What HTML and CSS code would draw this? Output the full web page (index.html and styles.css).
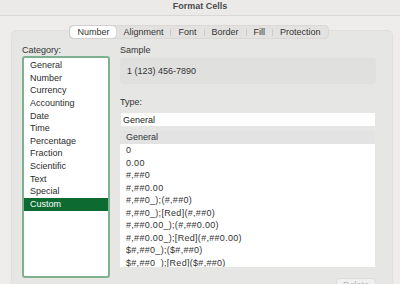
FILE: index.html
```html
<!DOCTYPE html>
<html lang="en">
<head>
    <meta charset="UTF-8">
    <meta name="viewport" content="width=device-width, initial-scale=1.0">
    <title>Format Cells</title>
    <link rel="stylesheet" href="styles.css">
</head>
<body>
    <div class="titlebar">Format Cells</div>
    <div class="main">
        <div class="panel">
            <div class="tabs">
                <div class="tab active">Number</div>
                <div class="tab">Alignment</div>
                <div class="sep"></div>
                <div class="tab">Font</div>
                <div class="sep"></div>
                <div class="tab">Border</div>
                <div class="sep"></div>
                <div class="tab">Fill</div>
                <div class="sep"></div>
                <div class="tab">Protection</div>
            </div>
            <div class="content">
                <div class="left">
                    <div class="label">Category:</div>
                    <ul class="category">
                        <li>General</li>
                        <li>Number</li>
                        <li>Currency</li>
                        <li>Accounting</li>
                        <li>Date</li>
                        <li>Time</li>
                        <li>Percentage</li>
                        <li>Fraction</li>
                        <li>Scientific</li>
                        <li>Text</li>
                        <li>Special</li>
                        <li class="selected">Custom</li>
                    </ul>
                </div>
                <div class="right">
                    <div class="label">Sample</div>
                    <div class="sample">1 (123) 456-7890</div>
                    <div class="label type-label">Type:</div>
                    <input type="text" class="type-input" value="General">
                    <ul class="formats">
                        <li class="header">General</li>
                        <li>0</li>
                        <li>0.00</li>
                        <li>#,##0</li>
                        <li>#,##0.00</li>
                        <li>#,##0_);(#,##0)</li>
                        <li>#,##0_);[Red](#,##0)</li>
                        <li>#,##0.00_);(#,##0.00)</li>
                        <li>#,##0.00_);[Red](#,##0.00)</li>
                        <li>$#,##0_);($#,##0)</li>
                        <li>$#,##0_);[Red]($#,##0)</li>
                    </ul>
                    <div class="actions">
                        <button type="button" disabled>Delete</button>
                    </div>
                </div>
            </div>
        </div>
    </div>
</body>
</html>
```

FILE: styles.css
```css
body {
    font-family: "Liberation Sans", Arial, sans-serif;
    font-size: 9px;
    margin: 0;
    padding: 0;
    background-color: #eeedec;
    color: #2f2f2f;
    overflow: hidden;
}
.titlebar {
    height: 16px;
    line-height: 12px;
    text-align: center;
    font-weight: bold;
    font-size: 9px;
    color: #4c4c4c;
    background-color: #ebeae9;
    border-bottom: 1px solid #d9d8d7;
    box-sizing: border-box;
}
.main {
    padding: 0 7px 0 11px;
}
.panel {
    margin-top: 14px;
    height: 300px;
    background-color: #e6e6e5;
    border: 1px solid #e0dfde;
    border-radius: 5px;
    padding: 0 16px 0 10px;
}
.tabs {
    display: flex;
    align-items: center;
    width: max-content;
    margin: -6px auto 0;
    height: 14px;
    box-sizing: border-box;
    border: 1px solid #d9d8d7;
    border-radius: 4px;
    background-color: #e3e2e1;
}
.tab {
    padding: 0 7px;
    line-height: 12px;
    color: #333;
}
.tab.active {
    background-color: #ffffff;
    border-radius: 4px;
    box-shadow: 0 0 1px rgba(0, 0, 0, 0.35);
    padding: 0 7px;
}
.sep {
    width: 1px;
    height: 7px;
    background-color: #cdcccb;
}
.content {
    display: flex;
    gap: 10px;
    margin-top: 5px;
}
.left {
    width: 88px;
}
.right {
    flex: 1;
}
.label {
    line-height: 12px;
    color: #333;
}
.category {
    list-style: none;
    margin: 0;
    padding: 1px 0 0;
    height: 222px;
    box-sizing: border-box;
    background-color: #ffffff;
    border: 2px solid #7eb18f;
    border-radius: 3px;
}
.category li {
    height: 12.64px;
    line-height: 12.64px;
    padding-left: 6px;
    color: #2c2c2c;
}
.category li.selected {
    background-color: #0d6a30;
    color: #ffffff;
}
.sample {
    margin-top: 2px;
    height: 26px;
    line-height: 26px;
    padding-left: 7px;
    background-color: #e0e0df;
    border-radius: 4px;
    color: #333;
}
.type-label {
    margin-top: 12px;
}
.type-input {
    display: block;
    margin: 5px 1px 0;
    width: calc(100% - 2px);
    height: 13px;
    box-sizing: border-box;
    border: none;
    padding: 0 2px;
    font-family: inherit;
    font-size: 9px;
    color: #222;
    background-color: #ffffff;
}
.formats {
    list-style: none;
    margin: 5px 1px 0 0;
    padding: 0;
    height: 136px;
    overflow: hidden;
    background-color: #ffffff;
}
.formats li {
    height: 12.5px;
    line-height: 12.5px;
    padding-left: 6px;
    color: #333;
    white-space: nowrap;
    letter-spacing: 0.3px;
}
.formats li.header {
    height: 13px;
    line-height: 13px;
    letter-spacing: 0;
    background-color: #e3e3e3;
}
.actions {
    display: flex;
    justify-content: flex-end;
    margin-top: 11px;
}
button {
    font-family: inherit;
    font-size: 9px;
    width: 40px;
    height: 14px;
    padding: 0;
    color: #b4b4b4;
    background-color: #f0f0f0;
    border: 1px solid #dcdcdc;
    border-radius: 4px;
}
```
